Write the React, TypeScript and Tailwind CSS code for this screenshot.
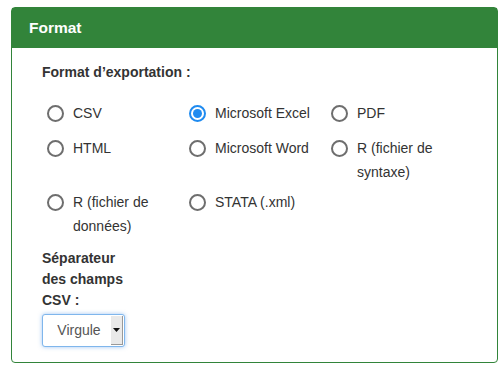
const font = { fontFamily: '"Liberation Sans", Arial, sans-serif' }

function Radio({ checked, label }: { checked?: boolean; label: string }) {
  return (
    <label className="flex items-start text-[14px] leading-[24px] text-[#333]">
      {checked ? (
        <span className="mt-[4px] ml-[5px] flex h-[17px] w-[17px] shrink-0 items-center justify-center rounded-full border-[2px] border-[#1f8bf0] bg-white">
          <span className="h-[9px] w-[9px] rounded-full bg-[#1f8bf0]" />
        </span>
      ) : (
        <span className="mt-[4px] ml-[5px] h-[17px] w-[17px] shrink-0 rounded-full border-[2px] border-[#6e6e6e] bg-white" />
      )}
      <span className="ml-[9px] w-[108px]">{label}</span>
    </label>
  )
}

export default function App() {
  return (
    <div className="h-[372px] w-[504px] bg-white pt-[7px] pl-[11px]" style={font}>
      <div className="w-[487px] rounded-[4px] border border-[#32843a]">
        <div className="flex h-[40px] items-center bg-[#32843a] pl-[17px] text-[15.5px] font-bold text-white">
          Format
        </div>

        <div className="pt-[14px] pb-[15px] pl-[30px]">
          <div className="text-[14px] font-bold leading-[20px] text-[#333]">
            Format d’exportation :
          </div>

          <div className="mt-[19px] grid grid-cols-[142px_142px_142px]">
            <Radio label="CSV" />
            <Radio checked label="Microsoft Excel" />
            <Radio label="PDF" />
          </div>
          <div className="mt-[11px] grid grid-cols-[142px_142px_142px]">
            <Radio label="HTML" />
            <Radio label="Microsoft Word" />
            <Radio label="R (fichier de syntaxe)" />
          </div>
          <div className="mt-[6px] grid grid-cols-[142px_142px_142px]">
            <Radio label="R (fichier de données)" />
            <Radio label="STATA (.xml)" />
          </div>

          <div className="mt-[10px] w-[96px] text-[14px] font-bold leading-[21px] text-[#333]">
            Séparateur des champs CSV :
          </div>

          <div className="mt-[3px] flex h-[33px] w-[83px] overflow-hidden rounded-[3px] border border-[#7fb6ec] bg-white shadow-[0_0_4px_rgba(80,150,230,0.55)]">
            <div className="flex flex-1 items-center justify-center pl-[4px] text-[14px] text-[#555]">
              Virgule
            </div>
            <div className="my-[1px] mr-[1px] flex w-[12px] items-center justify-center border-r border-b border-[#999] bg-[#e9e9e9]">
              <svg width="7" height="4" viewBox="0 0 7 4">
                <path d="M0 0h7L3.5 4z" fill="#111" />
              </svg>
            </div>
          </div>
        </div>
      </div>
    </div>
  )
}
